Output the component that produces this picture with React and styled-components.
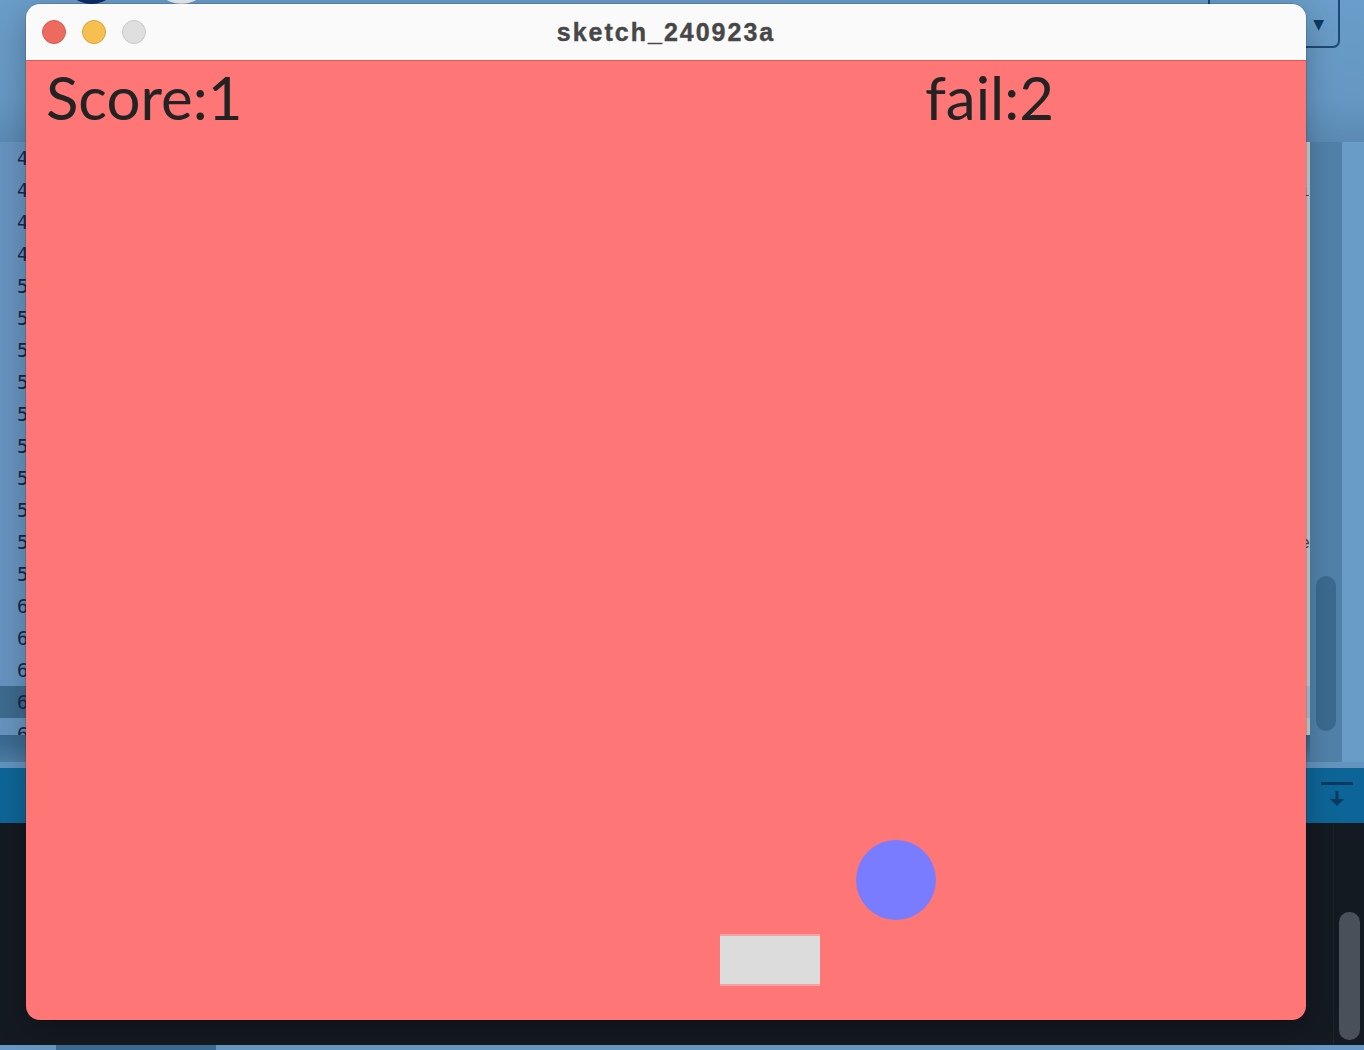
import React from 'react';
import styled, { createGlobalStyle } from 'styled-components';

const Global = createGlobalStyle`
    html, body {
        margin: 0;
        padding: 0;
        background: #141a21;
        overflow: hidden;
    }
`

const Screen = styled.div`
    position: relative;
    width: 1364px;
    height: 1050px;
    display: grid;
    grid-template-rows: 142px 620px 6px 55px 222px 5px;
    background: #6a9bc6;
    overflow: hidden;
`

/* ---- the IDE behind the sketch window ---- */

const Toolbar = styled.div`
    display: flex;
    align-items: flex-start;
    padding: 0 24px 0 63px;
    gap: 33px;
    background: linear-gradient(180deg, #6a9dc9 0%, #6597c2 70%, #5a8ab4 100%);
`

const RoundButton = styled.div`
    width: 57px;
    height: 57px;
    margin-top: -53px;
    border-radius: 50%;
    background: ${p => p.$light ? '#e9eef3' : '#0a2f6c'};
`

const Dropdown = styled.div`
    margin-left: auto;
    width: 132px;
    height: 60px;
    margin-top: -12px;
    box-sizing: border-box;
    border: 2px solid #1d4a72;
    border-radius: 7px;
    display: flex;
    align-items: center;
    justify-content: flex-end;
    padding: 12px 14px 0 0;
    color: #0c3a62;
    font: 14px "DejaVu Sans", sans-serif;
`

const Editor = styled.div`
    display: grid;
    grid-template-columns: 60px 1fr 32px 22px;
    grid-template-rows: 593px 27px;
`

const Gutter = styled.div`
    display: flex;
    flex-direction: column;
    background: linear-gradient(90deg, #6592bd, #6a9bc6);
    overflow: hidden;
`

const LineNo = styled.div`
    flex: none;
    height: 32px;
    padding-left: 17px;
    font: 19px/32px "DejaVu Sans Mono", monospace;
    color: #17284a;
    background: ${p => p.$current ? '#3d6a8f' : 'transparent'};
`

const Code = styled.div`
    display: flex;
    flex-direction: column;
    background: #cfcfcf;
    overflow: hidden;
`

const CodeLine = styled.div`
    flex: none;
    height: 32px;
    display: flex;
    align-items: center;
    justify-content: flex-end;
    font: 16px "DejaVu Sans Mono", monospace;
    color: #4a4a4a;
    background: ${p => p.$current ? '#b3c2cf' : 'transparent'};
`

const HScroll = styled.div`
    grid-column: 1 / 3;
    background: linear-gradient(180deg, #3a688f 0%, #3f6d94 40%, #4d7da5 100%);
`

const VScroll = styled.div`
    grid-row: 1 / 3;
    grid-column: 3;
    display: flex;
    flex-direction: column;
    justify-content: flex-end;
    padding: 0 6px 31px;
    background: #5181a9;
`

const Thumb = styled.div`
    height: ${p => p.$h}px;
    border-radius: 10px;
    background: ${p => p.$dark ? '#4a5059' : '#3b6a90'};
`

const OuterEdge = styled.div`
    grid-row: 1 / 3;
    grid-column: 4;
    background: #6a9cc8;
`

const Separator = styled.div`
    background: #6393be;
`

const ConsoleHeader = styled.div`
    display: flex;
    align-items: center;
    justify-content: flex-end;
    padding-right: 10px;
    background: #0d6597;
`

const Console = styled.div`
    display: grid;
    grid-template-columns: 1fr 1px 30px;
    background: #141a21;
`

const ConsoleDivider = styled.div`
    background: #1c232c;
`

const ConsoleScroll = styled.div`
    display: flex;
    flex-direction: column;
    justify-content: flex-end;
    padding: 0 4px 5px 5px;
`

const StatusStrip = styled.div`
    display: grid;
    grid-template-columns: 56px 160px 1fr;
    background: #6090bb;
`

const StatusTab = styled.div`
    background: ${p => p.$active ? '#3d6b91' : '#6898c3'};
`

/* ---- the sketch window ---- */

const SketchWindow = styled.div`
    position: absolute;
    left: 26px;
    top: 4px;
    width: 1280px;
    height: 1016px;
    display: flex;
    flex-direction: column;
    border-radius: 14px;
    overflow: hidden;
    box-shadow: 0 0 0 0.5px rgba(0, 0, 0, 0.25), 0 8px 30px rgba(0, 0, 0, 0.25);
`

const TitleBar = styled.div`
    position: relative;
    flex: none;
    height: 56px;
    display: flex;
    align-items: center;
    justify-content: center;
    background: #fafafa;
    border-bottom: 1px solid #dc5a58;
`

const Lights = styled.div`
    position: absolute;
    left: 16px;
    top: 16px;
    display: flex;
    gap: 16px;
`

const Light = styled.div`
    width: 24px;
    height: 24px;
    box-sizing: border-box;
    border-radius: 50%;
    background: ${p => p.$fill};
    border: 1px solid ${p => p.$edge};
`

const Title = styled.div`
    font: bold 25px "Liberation Sans", Arial, sans-serif;
    letter-spacing: 2px;
    color: #474747;
    -webkit-text-stroke: 0.4px #474747;
`

const Canvas = styled.div`
    position: relative;
    flex: 1;
    background: #ff7676;
`

const Label = styled.div`
    position: absolute;
    left: ${p => p.$x}px;
    top: 6px;
    font: 400 60px/60px Lato, "Noto Sans", sans-serif;
    color: #232323;
`

const Ball = styled.div`
    position: absolute;
    left: 830px;
    top: 779px;
    width: 80px;
    height: 80px;
    border-radius: 50%;
    background: #7a7cff;
`

const Paddle = styled.div`
    position: absolute;
    left: 694px;
    top: 873px;
    width: 100px;
    height: 52px;
    box-sizing: border-box;
    background: #dcdcdc;
    border-top: 2px solid #f0a4a4;
    border-bottom: 2px solid #f0a4a4;
`

const lines = [];
for (let n = 46; n <= 64; n++) lines.push(n);

function DownloadIcon() {
    return (
        <svg width="34" height="30" viewBox="0 0 34 30">
            <rect x="1" y="1" width="32" height="3" fill="#0b3a61" />
            <rect x="15.5" y="10" width="3" height="12" fill="#0b3a61" />
            <path d="M10 18 L24 18 L17 25 Z" fill="#0b3a61" />
        </svg>
    );
}

export default function App() {
    return (
        <>
            <Global />
            <Screen>
                <Toolbar>
                    <RoundButton />
                    <RoundButton $light />
                    <Dropdown>▼</Dropdown>
                </Toolbar>
                <Editor>
                    <Gutter>
                        {lines.map(n => (
                            <LineNo key={n} $current={n === 63}>{n}</LineNo>
                        ))}
                    </Gutter>
                    <Code>
                        {lines.map((n, i) => (
                            <CodeLine key={n} $current={n === 63}>
                                {i === 1 ? 'i' : i === 12 ? 'e' : ''}
                            </CodeLine>
                        ))}
                    </Code>
                    <VScroll>
                        <Thumb $h={155} />
                    </VScroll>
                    <OuterEdge />
                    <HScroll />
                </Editor>
                <Separator />
                <ConsoleHeader>
                    <DownloadIcon />
                </ConsoleHeader>
                <Console>
                    <div />
                    <ConsoleDivider />
                    <ConsoleScroll>
                        <Thumb $dark $h={128} />
                    </ConsoleScroll>
                </Console>
                <StatusStrip>
                    <StatusTab />
                    <StatusTab $active />
                    <StatusTab />
                </StatusStrip>

                <SketchWindow>
                    <TitleBar>
                        <Lights>
                            <Light $fill="#ed6a5e" $edge="#d65a4f" />
                            <Light $fill="#f5c04f" $edge="#dca33a" />
                            <Light $fill="#dfdfdf" $edge="#c9c9c9" />
                        </Lights>
                        <Title>sketch_240923a</Title>
                    </TitleBar>
                    <Canvas>
                        <Label $x={20}>Score:1</Label>
                        <Label $x={899}>fail:2</Label>
                        <Ball />
                        <Paddle />
                    </Canvas>
                </SketchWindow>
            </Screen>
        </>
    );
}
